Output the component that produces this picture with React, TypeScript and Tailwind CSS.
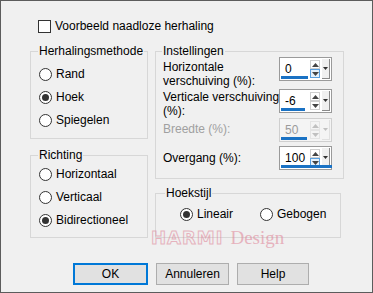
import React from "react"

const font = { fontFamily: '"Liberation Sans", Arial, sans-serif' }

function Radio({ label, checked, className = "" }: { label: string; checked?: boolean; className?: string }) {
    return (
        <div className={"flex items-center h-[14px] " + className}>
            <span className="flex items-center justify-center w-[13px] h-[13px] rounded-full border border-[#333] bg-white shrink-0">
                {checked ? <span className="w-[7px] h-[7px] rounded-full bg-[#333]" /> : null}
            </span>
            <span className="ml-[4px] text-[#000] whitespace-nowrap">{label}</span>
        </div>
    )
}

function Spin({ value, fill, disabled, active }: { value: string; fill: number; disabled?: boolean; active?: boolean }) {
    return (
        <div className={"relative flex items-stretch shrink-0 w-[53px] h-[24px] border " + (disabled ? "border-[#cfcfcf] bg-[#f4f4f4]" : "border-[#9a9a9a] bg-white")}>
            <div className={"flex-1 pl-[5px] pt-[4px] leading-[14px] " + (disabled ? "text-[#9b9b9b]" : "text-black")}>{value}</div>
            <div className="flex flex-col justify-center my-[1px] mr-[2px] w-[10px]">
                <div className={"h-[9px] flex items-center justify-center border " + (disabled ? "border-[#e4e4e4]" : "border-[#cfcfcf]")}>
                    <svg width="7" height="4" viewBox="0 0 7 4"><path d="M0 4 L3.5 0 L7 4Z" fill={disabled ? "#c0c0c0" : "#444"} /></svg>
                </div>
                <div className={"h-[9px] flex items-center justify-center border " + (active ? "border-[#5aa0e0] bg-[#e5f1fb]" : disabled ? "border-[#e4e4e4]" : "border-[#cfcfcf]")}>
                    <svg width="7" height="4" viewBox="0 0 7 4"><path d="M0 0 L3.5 4 L7 0Z" fill={disabled ? "#c0c0c0" : "#444"} /></svg>
                </div>
            </div>
            <div className={"flex items-center justify-center w-[8px] my-[1px] mr-[1px] border-r border-b " + (disabled ? "border-[#e0e0e0]" : "border-[#8a8a8a] bg-[#f0f0f0]")}>
                <svg width="5" height="3" viewBox="0 0 5 3"><path d="M0 0 L2.5 3 L5 0Z" fill={disabled ? "#c0c0c0" : "#333"} /></svg>
            </div>
            <div className="absolute left-[1px] bottom-[1px] h-[3px] bg-[#1a72c4]" style={{ width: fill + "px" }} />
        </div>
    )
}

export default function App() {
    return (
        <div className="relative w-[373px] h-[293px] bg-[#f0f0f0] border border-[#5c5c5c] text-[12px] leading-[14px] text-black overflow-hidden" style={font}>
            <div className="flex items-center pl-[37px] pt-[18px]">
                <span className="w-[13px] h-[13px] border border-[#333] bg-white" />
                <span className="ml-[4px]">Voorbeeld naadloze herhaling</span>
            </div>

            <div className="flex gap-[7px] pl-[29px] pt-[11px]">
                <div className="flex flex-col gap-[9px] w-[118px]">
                    <fieldset className="h-[95px] border border-[#d7d7d7] pl-[8px]">
                        <legend className="px-[1px] ml-[-1px]">Herhalingsmethode</legend>
                        <Radio label="Rand" checked={false} className="mt-[9px]" />
                        <Radio label="Hoek" checked className="mt-[9px]" />
                        <Radio label="Spiegelen" className="mt-[9px]" />
                    </fieldset>
                    <fieldset className="h-[90px] border border-[#d7d7d7] pl-[8px]">
                        <legend className="px-[1px] ml-[-1px]">Richting</legend>
                        <Radio label="Horizontaal" className="mt-[5px]" />
                        <Radio label="Verticaal" className="mt-[9px]" />
                        <Radio label="Bidirectioneel" checked className="mt-[9px]" />
                    </fieldset>
                </div>

                <div className="flex flex-col gap-[7px] w-[186px]">
                    <fieldset className="h-[135px] border border-[#d7d7d7] pl-[7px] pr-[11px]">
                        <legend className="px-[1px] ml-[-1px]">Instellingen</legend>
                        <div className="flex justify-between items-start mt-[-1px]">
                            <div className="pt-[3px] whitespace-nowrap">Horizontale<br />verschuiving (%):</div>
                            <Spin value="0" fill={27} active />
                        </div>
                        <div className="flex justify-between items-start mt-[1px]">
                            <div className="pt-[1px] whitespace-nowrap">Verticale verschuiving<br />(%):</div>
                            <Spin value="-6" fill={24} />
                        </div>
                        <div className="flex justify-between items-center mt-[0px]">
                            <div className="text-[#a0a0a0] mt-[-2px]">Breedte (%):</div>
                            <Spin value="50" fill={26} disabled />
                        </div>
                        <div className="flex justify-between items-center mt-[4px]">
                            <div className="mt-[-1px]">Overgang (%):</div>
                            <Spin value="100" fill={51} active />
                        </div>
                    </fieldset>
                    <fieldset className="h-[52px] border border-[#d7d7d7] pl-[24px]">
                        <legend className="px-[1px] ml-[-15px]">Hoekstijl</legend>
                        <div className="flex mt-[7px]">
                            <Radio label="Lineair" checked className="w-[80px]" />
                            <Radio label="Gebogen" />
                        </div>
                    </fieldset>
                </div>
            </div>

            <div className="flex gap-[8px] pl-[72px] pt-[25px]">
                <button className="w-[75px] h-[22px] border-2 border-[#0078d7] bg-[#e1e1e1]">OK</button>
                <button className="w-[73px] h-[22px] border border-[#adadad] bg-[#e1e1e1]">Annuleren</button>
                <button className="w-[72px] h-[22px] border border-[#adadad] bg-[#e1e1e1]">Help</button>
            </div>

            <div className="absolute left-[150px] top-[227px] flex items-baseline gap-[7px] leading-none opacity-60 pointer-events-none">
                <span className="text-[18px] font-bold tracking-[1px] text-transparent [-webkit-text-stroke:1px_#e08a9c]" style={{ fontFamily: '"DejaVu Sans", sans-serif' }}>HARMI</span>
                <span className="text-[19px] text-[#e08a9c]" style={{ fontFamily: '"Liberation Serif", serif' }}>Design</span>
            </div>
        </div>
    )
}
